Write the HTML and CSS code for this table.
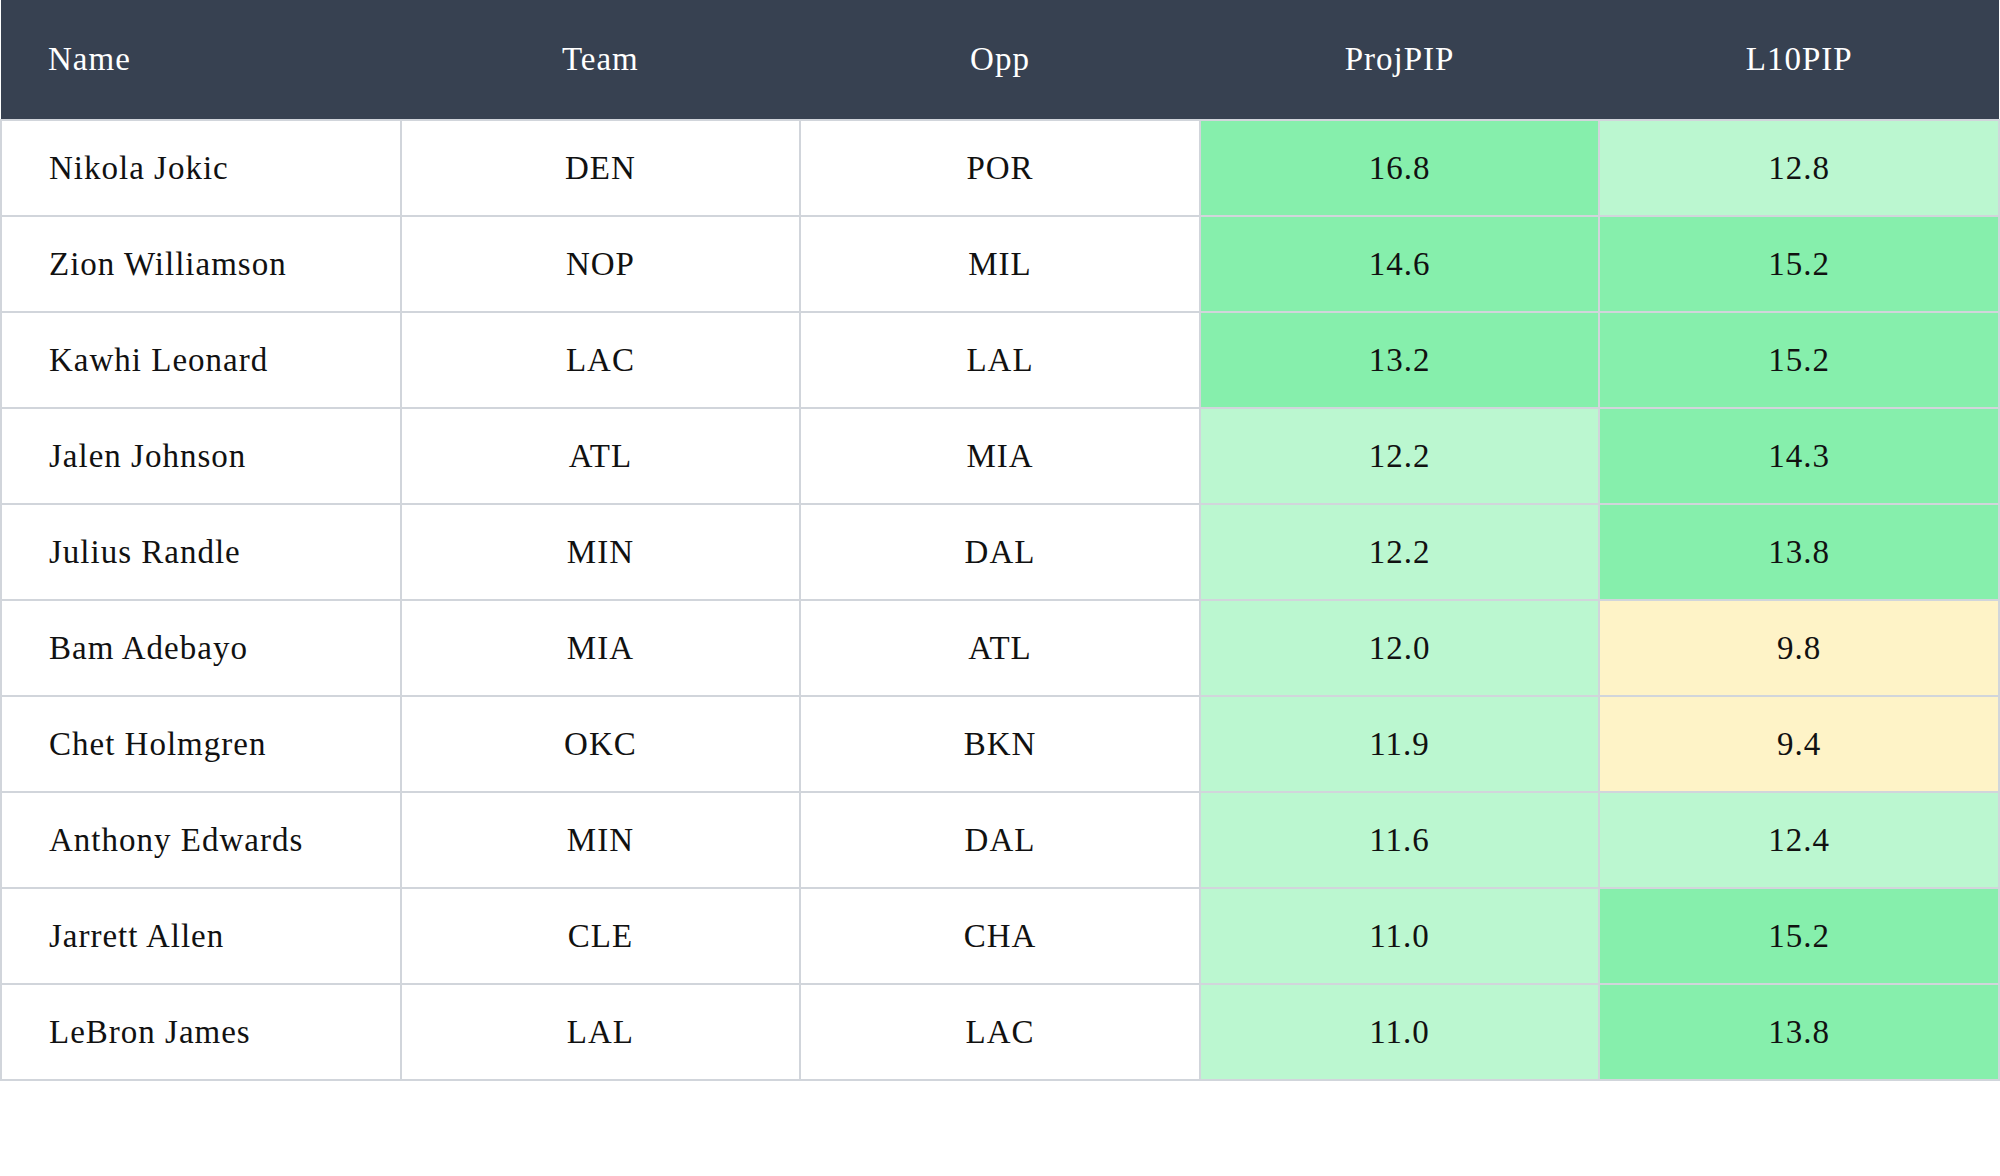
FILE: index.html
```html
<!DOCTYPE html>
<html>
<head>
<meta charset="utf-8">
<link rel="stylesheet" href="styles.css">
</head>
<body>
<table class="grid">
  <thead>
    <tr>
      <th class="name">Name</th>
      <th>Team</th>
      <th>Opp</th>
      <th>ProjPIP</th>
      <th>L10PIP</th>
    </tr>
  </thead>
  <tbody>
    <tr><td class="name">Nikola Jokic</td><td>DEN</td><td>POR</td><td class="hi">16.8</td><td class="mid">12.8</td></tr>
    <tr><td class="name">Zion Williamson</td><td>NOP</td><td>MIL</td><td class="hi">14.6</td><td class="hi">15.2</td></tr>
    <tr><td class="name">Kawhi Leonard</td><td>LAC</td><td>LAL</td><td class="hi">13.2</td><td class="hi">15.2</td></tr>
    <tr><td class="name">Jalen Johnson</td><td>ATL</td><td>MIA</td><td class="mid">12.2</td><td class="hi">14.3</td></tr>
    <tr><td class="name">Julius Randle</td><td>MIN</td><td>DAL</td><td class="mid">12.2</td><td class="hi">13.8</td></tr>
    <tr><td class="name">Bam Adebayo</td><td>MIA</td><td>ATL</td><td class="mid">12.0</td><td class="low">9.8</td></tr>
    <tr><td class="name">Chet Holmgren</td><td>OKC</td><td>BKN</td><td class="mid">11.9</td><td class="low">9.4</td></tr>
    <tr><td class="name">Anthony Edwards</td><td>MIN</td><td>DAL</td><td class="mid">11.6</td><td class="mid">12.4</td></tr>
    <tr><td class="name">Jarrett Allen</td><td>CLE</td><td>CHA</td><td class="mid">11.0</td><td class="hi">15.2</td></tr>
    <tr><td class="name">LeBron James</td><td>LAL</td><td>LAC</td><td class="mid">11.0</td><td class="hi">13.8</td></tr>
  </tbody>
</table>
</body>
</html>
```
FILE: styles.css
```css
html, body {
  margin: 0;
  padding: 0;
  background: #ffffff;
}
body {
  font-family: "Liberation Serif", "Times New Roman", serif;
  font-size: 33px;
  letter-spacing: 1px;
  color: #111111;
}
.grid {
  width: 2000px;
  border-collapse: collapse;
  table-layout: fixed;
}
.grid th {
  background: #374151;
  color: #ffffff;
  font-weight: 400;
  height: 119px;
  padding: 0;
  text-align: center;
  border-bottom: 2px solid #d1d5db;
}
.grid td {
  height: 94px;
  padding: 0;
  text-align: center;
  border: 2px solid #d1d5db;
}
.grid th.name,
.grid td.name {
  text-align: left;
  padding-left: 47px;
}
.grid td.hi { background: #86efac; }
.grid td.mid { background: #bbf7d0; }
.grid td.low { background: #fef3c7; }
```
